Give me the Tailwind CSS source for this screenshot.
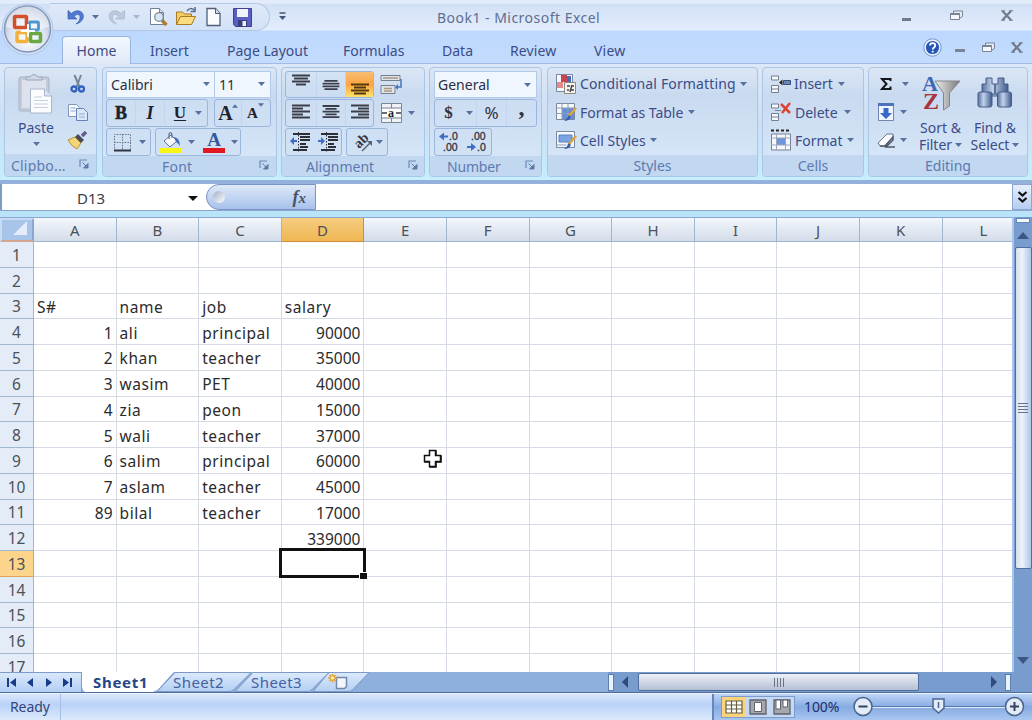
<!DOCTYPE html>
<html lang="en">
<head>
    <meta charset="UTF-8">
    <meta name="viewport" content="width=device-width, initial-scale=1.0">
    <title>Book1 - Microsoft Excel</title>
    <script src="https://cdn.jsdelivr.net/npm/@tailwindcss/browser@4"></script>
</head>
<body class="w-[1032px] h-[720px] overflow-hidden bg-[#bfdbff] font-['Noto_Sans',sans-serif] text-[14px] text-[#3c4c86] whitespace-nowrap">
    <!-- shared icons -->
    <svg class="hidden">
        <symbol id="down" viewBox="0 0 7 4"><path d="M0 0h7L3.5 4z" fill="#56719f"/></symbol>
        <symbol id="launcher" viewBox="0 0 10 10"><path d="M1 8V1h7" fill="none" stroke="#7089b5" stroke-width="1.2"/><path d="M3.5 3.5l4 4M9 4.500V9H4.500z" fill="#5f79a8" stroke="#5f79a8"/></symbol>
        <symbol id="restore" viewBox="0 0 13 11"><path d="M3.500 3V1h9v5.500L10 8" fill="#e6ecf6" stroke="#7b8494"/><path d="M.5 3.500h9v6h-9z" fill="#f4f7fc" stroke="#7b8494"/><path d="M0 3h10v2H0z" fill="#7b8494"/></symbol>
        <symbol id="close" viewBox="0 0 12 11"><path d="M1.500 1l8.500 9M10 1L1.500 10" stroke="#727a88" stroke-width="2.200"/><path d="M0 .8h4M8 .8h4M0 10.200h4M8 10.200h4" stroke="#727a88" stroke-width="1"/></symbol>
    </svg>

    <div class="flex flex-col h-[720px]">
        <!-- title bar + tabs -->
        <header class="relative h-[64px] shrink-0">
            <div class="h-[31px] flex items-center bg-linear-to-b from-[#e2ecfb] from-10% via-[#d2e0f6] via-15% to-[#e3eefd] border-b border-[#d3e5fd]">
                <div class="ml-[50px] h-[28px] w-[220px] mt-[4px] rounded-r-full border border-[#b3c8e8] border-l-0 bg-linear-to-b from-[#dfe9f8] to-[#d3e2f7] flex items-center pl-[17px]">
                    <svg class="w-[19px] h-[19px]" viewBox="0 0 19 19"><path d="M1 2.500v8.500h9L7 8.300C10 5.500 13.500 6 13 10c-.3 3-2 4.500-4 6 5-1.500 7.800-4.500 7.300-8.800C15.500 2.500 9 1 4.500 5.500z" fill="#5079cf" stroke="#3560b5" stroke-width=".7"/></svg>
                    <svg class="w-[7px] h-[4px] ml-[6px]"><use href="#down"/></svg>
                    <svg class="w-[19px] h-[19px] ml-[8px]" viewBox="0 0 19 19"><path d="M17.500 2.500v8.500h-9l3-2.700C8.500 5.500 5 6 5.500 10c.3 3 2 4.500 4 6-5-1.500-7.800-4.500-7.300-8.800C3 2.500 9.500 1 14 5.500z" fill="#bcc9dc" stroke="#a8b6cb" stroke-width=".7"/></svg>
                    <svg class="w-[7px] h-[4px] ml-[7px] opacity-40"><use href="#down"/></svg>
                    <svg class="w-[20px] h-[20px] ml-[9px]" viewBox="0 0 20 20"><path d="M1.500 1.500h9l4 4v12h-13z" fill="#fff" stroke="#70809c"/><path d="M10.500 1.500v4h4" fill="#cfdbee" stroke="#70809c"/><path d="M13 13.500l4.500 4.500" stroke="#b07a30" stroke-width="3.500"/><circle cx="10" cy="10" r="4.300" fill="#d7e8f5" stroke="#7b8ba4" stroke-width="1.300"/></svg>
                    <svg class="w-[22px] h-[20px] ml-[6px]" viewBox="0 0 22 20"><path d="M1.500 17V5h6l2 2h7v10z" fill="#f2cb62" stroke="#a97c22"/><path d="M1.500 17.500l4-8h15l-4 8z" fill="#fbdd80" stroke="#a97c22"/><path d="M12 4c2-3 5-3 7-1M20 0v4.500h-4.500" fill="none" stroke="#546a8f" stroke-width="1.500"/></svg>
                    <svg class="w-[16px] h-[20px] ml-[9px]" viewBox="0 0 16 20"><path d="M1 1.500h8.500l4.500 5v12H1z" fill="#fbfcff" stroke="#4f5d78" stroke-width="1.300"/><path d="M9.500 1.500v5H14" fill="#cfdbee" stroke="#4f5d78"/></svg>
                    <svg class="w-[19px] h-[19px] ml-[11px]" viewBox="0 0 19 19"><path d="M.5.500h18v18h-16l-2-2z" fill="#5a5fc4" stroke="#3e4292"/><path d="M4 1h11v8H4z" fill="#f0f3fb"/><path d="M5 12h9v6.500H5z" fill="#3a3e80"/><path d="M9.500 13h3.500v5H9.500z" fill="#f0f3fb"/></svg>
                </div>
                <svg class="w-[9px] h-[9px] ml-[8px] mt-[2px]" viewBox="0 0 9 9"><path d="M1.500 1h6" stroke="#44557a" stroke-width="1.500"/><path d="M1 4h7L4.500 8z" fill="#44557a"/></svg>
                <div class="ml-[150px] mt-[5px] w-[170px] text-[14px] text-[#5d6f92] tracking-[0.48px]">Book1 - Microsoft Excel</div>
                <div class="ml-[295px] mt-[8px] w-[9px] h-[3px] bg-[#727a88]"></div>
                <svg class="w-[13px] h-[11px] ml-[39px]"><use href="#restore"/></svg>
                <svg class="w-[12px] h-[11px] ml-[38px]"><use href="#close"/></svg>
            </div>
            <nav class="flex h-[33px] items-end bg-linear-to-b from-[#bcd8ff] to-[#c4dcfd] border-b border-[#9fbde6]">
                <div class="ml-[62px] w-[69px] h-[28px] -mb-px pt-[3px] text-center rounded-t-[4px] border border-b-0 border-[#95b4df] bg-linear-to-b from-[#f3f8ff] to-[#dfe9f6]">Home</div>
                <div class="w-[39px] h-[23px] ml-[19px]">Insert</div>
                <div class="w-[82px] h-[23px] ml-[38px]">Page Layout</div>
                <div class="w-[62px] h-[23px] ml-[34px]">Formulas</div>
                <div class="w-[33px] h-[23px] ml-[37px]">Data</div>
                <div class="w-[49px] h-[23px] ml-[35px] tracking-[0.1px]">Review</div>
                <div class="w-[33px] h-[23px] ml-[35px] tracking-[0.2px]">View</div>
                <svg class="w-[19px] h-[19px] ml-[296px] mb-[6px]" viewBox="0 0 19 19"><circle cx="9.500" cy="9.500" r="8.700" fill="#eaf2fd" stroke="#6f92cc"/><circle cx="9.500" cy="9.500" r="6.600" fill="#2456b8"/><path d="M7 7.500c0-3.300 5.300-3.300 5.300 0 0 2-2.600 2-2.600 4M9.700 12.700v1.700" fill="none" stroke="#fff" stroke-width="1.800"/></svg>
                <div class="w-[10px] h-[3px] ml-[13px] mb-[11px] bg-[#7b8494]"></div>
                <svg class="w-[13px] h-[11px] ml-[17px] mb-[10px]"><use href="#restore"/></svg>
                <svg class="w-[12px] h-[11px] ml-[16px] mb-[10px]"><use href="#close"/></svg>
            </nav>
            <!-- office button -->
            <svg class="absolute left-[1px] top-[3px] w-[54px] h-[54px]" viewBox="0 0 54 54">
                <defs><radialGradient id="orb" cx=".5" cy=".7" r=".65"><stop offset="0" stop-color="#fff"/><stop offset=".6" stop-color="#dbe3f0"/><stop offset="1" stop-color="#a9b9d3"/></radialGradient></defs>
                <circle cx="26.500" cy="26.500" r="25.500" fill="#cfdff5" stroke="#b3c8e8"/>
                <circle cx="26.500" cy="26" r="23" fill="url(#orb)" stroke="#8497b8" stroke-width="1.500"/>
                <path d="M5 24a21.500 20.500 0 0 1 43 0q-21 7-43 0z" fill="#fff" opacity=".5"/>
                <g fill="none" stroke-width="3.500">
                    <rect x="13.500" y="13.500" width="12" height="11" rx="1" stroke="#d2502a"/>
                    <rect x="28.500" y="19" width="9" height="8" rx="1" stroke="#4f95d0" stroke-width="2.800"/>
                    <rect x="16" y="29.500" width="10" height="9" rx="1" stroke="#f2b13a"/>
                    <rect x="29.500" y="30.500" width="10" height="8" rx="1" stroke="#69a843"/>
                </g>
                <path d="M20 28h14M27 21v13" stroke="#fff" stroke-width="2"/>
            </svg>
        </header>

        <!-- ribbon -->
        <section class="h-[116px] shrink-0 flex pl-[4px] pt-[3px] bg-linear-to-b from-[#dce8f7] via-[#cddff5] to-[#c3eefc] border-b-2 border-[#c5f0fc]">
            <!-- Clipboard -->
            <div class="w-[93px] h-[110px] mr-[5px] flex flex-col rounded-[4px] border border-[#aac5e6] overflow-hidden bg-linear-to-b from-[#dce7f5] via-[#c9daf0] via-25% to-[#dae9fa]">
                <div class="flex h-[88px]">
                    <div class="w-[62px] flex flex-col items-center pt-[5px]">
                        <svg class="w-[36px] h-[42px]" viewBox="0 0 36 42"><rect x="1" y="4" width="30" height="34" rx="2" fill="#c3cad9" stroke="#a9b3c6"/><rect x="4" y="7" width="24" height="28" fill="#dde2ec"/><path d="M8 7V4h4q4-5 8 0h4v3z" fill="#d0d7e3" stroke="#98a4b8"/><path d="M12.500 16h14l7 7v17h-21z" fill="#fbfcfe" stroke="#a9b6cc"/><path d="M26.500 16v7h7" fill="#dbe4f1" stroke="#a9b6cc"/><path d="M16 24h8m-8 3.500h14M16 31h14m-14 3.500h14" stroke="#c5cfdf"/></svg>
                        <span class="mt-[3px] leading-[20px]">Paste</span>
                        <svg class="w-[7px] h-[4px] mt-[4px]"><use href="#down"/></svg>
                    </div>
                    <div class="flex flex-col items-center gap-[8px] pt-[6px] w-[22px]">
                        <svg class="w-[18px] h-[20px]" viewBox="0 0 18 20"><path d="M5.500 1l5 12M12 1L7.500 13" stroke="#75849b" stroke-width="2"/><circle cx="5" cy="15" r="2.500" fill="none" stroke="#3461bd" stroke-width="2.300"/><circle cx="12.500" cy="15" r="2.500" fill="none" stroke="#3461bd" stroke-width="2.300"/></svg>
                        <svg class="w-[22px] h-[20px]" viewBox="0 0 22 20"><path d="M1.500 2.500h8l3 3v9h-11z" fill="#f6f9fe" stroke="#8297bd"/><path d="M9.500 6.500h7l4 4v8h-11z" fill="#dce8f9" stroke="#6482b8"/><path d="M3.500 6h5m-5 3h5M12 12h6m-6 3h6" stroke="#92aad3"/></svg>
                        <svg class="w-[22px] h-[20px]" viewBox="0 0 22 20"><path d="M1 10l7-3 6 6-4 6Q5 17 1 10z" fill="#f4d678" stroke="#b88f35"/><path d="M8 7l3-3 6 6-3 3z" fill="#4a4b58"/><path d="M15 6l4-4" stroke="#665a8e" stroke-width="3.500"/></svg>
                    </div>
                </div>
                <div class="flex-1 flex items-center bg-[#c1d8f0] text-[#6078b0] pl-[6px] pt-[1px]"><span class="w-[56px] tracking-[0.2px]">Clipbo...</span><svg class="w-[10px] h-[10px] ml-[12px] -mt-[4px]"><use href="#launcher"/></svg></div>
            </div>
            <!-- Font -->
            <div class="w-[175px] h-[110px] mr-[4px] flex flex-col rounded-[4px] border border-[#aac5e6] overflow-hidden bg-linear-to-b from-[#dce7f5] via-[#c9daf0] via-25% to-[#dae9fa]">
                <div class="h-[88px] pl-[3px] pt-[3px]">
                    <div class="flex h-[27px]">
                        <div class="w-[109px] flex items-center justify-between bg-[#f0f6fe] border border-[#b3cae8] pl-[4px] pr-[4px] pb-px text-[#2a3042]">Calibri<svg class="w-[7px] h-[4px]"><use href="#down"/></svg></div>
                        <div class="w-[56px] flex items-center justify-between bg-[#f0f6fe] border border-[#b3cae8] border-l-0 pl-[4px] pr-[5px] pb-px text-[#2a3042]">11<svg class="w-[7px] h-[4px]"><use href="#down"/></svg></div>
                    </div>
                    <div class="flex h-[28px] gap-[6px] mt-px font-['Liberation_Serif',serif] text-[#20222a]">
                        <div class="w-[102px] flex items-center rounded-[3px] border border-[#9ab6dc] bg-[#cfdff4]/60">
                            <b class="w-[28px] text-center text-[18px] leading-[24px] [-webkit-text-stroke:0.5px]">B</b><i class="w-[30px] text-center text-[18px] leading-[24px] font-bold border-x border-[#c3d4ec]">I</i><b class="w-[30px] text-center text-[17px] leading-[24px] underline underline-offset-2">U</b><svg class="w-[7px] h-[4px]"><use href="#down"/></svg>
                        </div>
                        <div class="w-[57px] flex items-center rounded-[3px] border border-[#9ab6dc] bg-[#cfdff4]/60">
                            <div class="w-[27px] flex justify-center border-r border-[#c3d4ec]"><b class="text-[20px] leading-[25px]">A</b><svg class="w-[6px] h-[4px] mt-[3px] -ml-px rotate-180"><use href="#down"/></svg></div>
                            <div class="w-[27px] flex justify-center"><b class="text-[15px] leading-[29px]">A</b><svg class="w-[6px] h-[4px] mt-[4px]"><use href="#down"/></svg></div>
                        </div>
                    </div>
                    <div class="flex h-[28px] gap-[4px] mt-px">
                        <div class="w-[45px] flex items-center rounded-[3px] border border-[#9ab6dc] bg-[#cfdff4]/60 pl-[6px]">
                            <svg class="w-[19px] h-[19px]" viewBox="0 0 19 19"><path d="M1.500 18V1.500h16V18M9.500 1v17M1 9.500h17" fill="none" stroke="#647087" stroke-dasharray="1.500 1.200"/><path d="M1 17.500h17" stroke="#2e3544" stroke-width="2"/></svg>
                            <svg class="w-[7px] h-[4px] ml-[7px]"><use href="#down"/></svg>
                        </div>
                        <div class="w-[86px] flex items-center rounded-[3px] border border-[#9ab6dc] bg-[#cfdff4]/60 pl-[4px]">
                            <svg class="w-[22px] h-[21px]" viewBox="0 0 22 21"><path d="M0 16h21v5H0z" fill="#f7f416"/><path d="M4 9l7-6 6 6-7 6z" fill="#f5f8fc" stroke="#61708b"/><path d="M9 7V2q2-3 3 1v3" fill="none" stroke="#61708b" stroke-width="1.200"/><path d="M14 5q6 1 6 9-2-3-4-4z" fill="#446bba"/></svg>
                            <svg class="w-[7px] h-[4px] ml-[6px]"><use href="#down"/></svg>
                            <div class="ml-[8px] w-[22px] h-[22px] flex flex-col items-center border-b-5 border-[#df1822] font-['Liberation_Serif',serif] text-[19px] leading-[17px] font-bold text-[#35599c]">A</div>
                            <svg class="w-[7px] h-[4px] ml-[6px]"><use href="#down"/></svg>
                        </div>
                    </div>
                </div>
                <div class="flex-1 flex items-center bg-[#c1d8f0] text-[#6078b0] pl-[59px]"><span class="w-[40px] tracking-[0.2px]">Font</span><svg class="w-[10px] h-[10px] ml-[57px] -mt-[4px]"><use href="#launcher"/></svg></div>
            </div>
            <!-- Alignment -->
            <div class="w-[144px] h-[110px] mr-[4px] flex flex-col rounded-[4px] border border-[#aac5e6] overflow-hidden bg-linear-to-b from-[#dce7f5] via-[#c9daf0] via-25% to-[#dae9fa]">
                <div class="h-[88px] pl-[3px] pt-[3px] text-[#30333c]">
                    <div class="flex h-[27px]">
                        <div class="w-[89px] flex rounded-[3px] border border-[#9ab6dc] bg-[#cfdff4]/60">
                            <svg class="w-[30px] h-[25px]" viewBox="0 0 30 25"><path d="M6 3.500h18M8 6.500h14M6 9.500h18M10 12.500h10" stroke="#3b3e48" stroke-width="1.900"/></svg>
                            <svg class="w-[30px] h-[25px] border-x border-[#c3d4ec]" viewBox="0 0 30 25"><path d="M8 8.500h14M6 11.500h18M6 14.500h18M8 17.500h14" stroke="#3b3e48" stroke-width="1.900"/></svg>
                            <svg class="w-[27px] h-[25px] bg-linear-to-b from-[#f6bd73] via-[#fda43f] to-[#fde36b]" viewBox="0 0 27 25"><path d="M5 12.500h18M8 15.500h12M5 18.500h18M8 21.500h12" stroke="#54380e" stroke-width="1.900"/></svg>
                        </div>
                        <svg class="w-[24px] h-[22px] ml-[6px] mt-[3px]" viewBox="0 0 24 22"><path d="M1 1.500h19v5H1zM1 11.500h14v8H1z" fill="#dfe4ec" stroke="#75808f"/><path d="M3 4h15M4 14.500h8M4 17h8" stroke="#a79880" stroke-width="1.500"/><path d="M21 5v8h-4" fill="none" stroke="#4a72bb" stroke-width="1.500"/><path d="M18 10v6l-3-3z" fill="#4a72bb"/></svg>
                    </div>
                    <div class="flex items-center h-[28px] mt-px">
                        <div class="w-[89px] h-full flex rounded-[3px] border border-[#9ab6dc] bg-[#cfdff4]/60">
                            <svg class="w-[30px] h-[26px]" viewBox="0 0 30 26"><path d="M6 5.500h18M6 8.500h11M6 11.500h18M6 14.500h11M6 17.500h18" stroke="#3b3e48" stroke-width="1.900"/></svg>
                            <svg class="w-[30px] h-[26px] border-x border-[#c3d4ec]" viewBox="0 0 30 26"><path d="M6 5.500h18M9 8.500h12M6 11.500h18M9 14.500h12M6 17.500h18" stroke="#3b3e48" stroke-width="1.900"/></svg>
                            <svg class="w-[27px] h-[26px]" viewBox="0 0 27 26"><path d="M5 5.500h18M12 8.500h11M5 11.500h18M12 14.500h11M5 17.500h18" stroke="#3b3e48" stroke-width="1.900"/></svg>
                        </div>
                        <svg class="w-[21px] h-[20px] ml-[7px]" viewBox="0 0 21 20"><path d="M.500.500h20v19H.500zM.500 5h20M.500 15h20M10.500 0v5m0 10v5" fill="#eef1f6" stroke="#7b8697"/><path d="M1 6h19v8H1z" fill="#fff"/><path d="M1 10h5M20 10h-5" stroke="#3b3e48" stroke-width="1.500"/><text x="7" y="13.500" font-size="12" font-weight="bold" font-family="Liberation Serif" fill="#222">a</text></svg>
                        <svg class="w-[7px] h-[4px] ml-[6px]"><use href="#down"/></svg>
                    </div>
                    <div class="flex h-[28px] gap-[4px] mt-px">
                        <div class="w-[57px] flex items-center rounded-[3px] border border-[#9ab6dc] bg-[#cfdff4]/60 pl-[4px] gap-[7px]">
                            <svg class="w-[21px] h-[20px]" viewBox="0 0 21 20"><path d="M3 2h17M10 5h10M10 8h10M10 12h6M10 15h8M3 18h14" stroke="#2d3039" stroke-width="2"/><path d="M8.500 0v20" stroke="#2d3039" stroke-dasharray="1.500"/><path d="M0 9l4-4v3h3v2H4v3z" fill="#3f6cc4"/></svg>
                            <svg class="w-[21px] h-[20px]" viewBox="0 0 21 20"><path d="M3 2h17M10 5h10M10 8h10M10 12h6M10 15h8M3 18h14" stroke="#2d3039" stroke-width="2"/><path d="M8.500 0v20" stroke="#2d3039" stroke-dasharray="1.500"/><path d="M7 9L3 5v3H0v2h3v3z" fill="#3f6cc4"/></svg>
                        </div>
                        <div class="w-[42px] flex items-center rounded-[3px] border border-[#9ab6dc] bg-[#cfdff4]/60 pl-[5px]">
                            <svg class="w-[21px] h-[21px] overflow-visible" viewBox="0 0 21 21"><text x="7" y="17" transform="rotate(-45 7 17)" font-size="14" font-weight="bold" font-family="Liberation Serif" fill="#333743">ab</text><path d="M10 19l8-8" stroke="#59616f" stroke-width="1.400"/><path d="M20 9v5l-5-5z" fill="#59616f"/></svg>
                            <svg class="w-[7px] h-[4px] ml-[3px]"><use href="#down"/></svg>
                        </div>
                    </div>
                </div>
                <div class="flex-1 flex items-center bg-[#c1d8f0] text-[#6078b0] pl-[24px]"><span class="w-[70px]">Alignment</span><svg class="w-[10px] h-[10px] ml-[32px] -mt-[4px]"><use href="#launcher"/></svg></div>
            </div>
            <!-- Number -->
            <div class="w-[113px] h-[110px] mr-[5px] flex flex-col rounded-[4px] border border-[#aac5e6] overflow-hidden bg-linear-to-b from-[#dce7f5] via-[#c9daf0] via-25% to-[#dae9fa]">
                <div class="h-[88px] pl-[4px] pt-[3px] text-[#30333c]">
                    <div class="w-[103px] h-[27px] flex items-center justify-between bg-[#f0f6fe] border border-[#b3cae8] pl-[3px] pr-[5px] text-[14px] text-[#2a3042]">General<svg class="w-[7px] h-[4px]"><use href="#down"/></svg></div>
                    <div class="w-[103px] h-[28px] mt-px flex items-center rounded-[3px] border border-[#9ab6dc] bg-[#cfdff4]/60">
                        <b class="w-[27px] text-center font-['Liberation_Serif',serif] text-[17px]">$</b><svg class="w-[7px] h-[4px] ml-[4px]"><use href="#down"/></svg>
                        <span class="w-[31px] h-full ml-[3px] border-x border-[#c3d4ec] text-center text-[17px] leading-[25px]">%</span>
                        <b class="w-[29px] -mt-[12px] text-center font-['Liberation_Serif',serif] text-[24px] leading-[20px]">,</b>
                    </div>
                    <div class="w-[58px] h-[28px] mt-px flex items-center rounded-[3px] border border-[#9ab6dc] bg-[#cfdff4]/60 pl-[3px] gap-[6px]">
                        <svg class="w-[22px] h-[24px] overflow-visible" viewBox="0 0 22 24" font-family="Liberation Sans" font-size="10.5" fill="#30333c" stroke="#30333c" stroke-width=".3"><text x="11" y="10">.0</text><text x="5" y="20.500">.00</text><path d="M1 6.500l5-4v3h4v2H6v3z" fill="#3f6cc4" stroke="none"/></svg>
                        <svg class="w-[22px] h-[24px] overflow-visible" viewBox="0 0 22 24" font-family="Liberation Sans" font-size="10.5" fill="#30333c" stroke="#30333c" stroke-width=".3"><text x="5" y="10">.00</text><text x="11" y="20.500">.0</text><path d="M10 17l-5-4v3H1v2h4v3z" fill="#3f6cc4" stroke="none"/></svg>
                    </div>
                </div>
                <div class="flex-1 flex items-center bg-[#c1d8f0] text-[#6078b0] pl-[17px]"><span class="w-[54px] tracking-[-0.2px]">Number</span><svg class="w-[10px] h-[10px] ml-[24px] -mt-[4px]"><use href="#launcher"/></svg></div>
            </div>
            <!-- Styles -->
            <div class="w-[211px] h-[110px] mr-[4px] flex flex-col rounded-[4px] border border-[#aac5e6] overflow-hidden bg-linear-to-b from-[#dce7f5] via-[#c9daf0] via-25% to-[#dae9fa]">
                <div class="h-[88px] pl-[7px] pt-[2px]">
                    <div class="h-[28px] flex items-center">
                        <svg class="w-[22px] h-[22px]" viewBox="0 0 22 22"><path d="M1.500 1.500h16v17h-16z" fill="#f6f8fc" stroke="#7b87a0"/><path d="M6 2h6v7H6z" fill="#c9454b"/><path d="M2 9h6v6H2z" fill="#e58a8a"/><path d="M12 3h4v8h-4z" fill="#4669b8"/><path d="M9.500 9.500h11v11h-11z" fill="#f4f4f2" stroke="#8c8778"/><path d="M12 13h3m2 0h2m-7 4h2m2 0h3m-2-5l-2 7" stroke="#444" stroke-width="1.500"/></svg>
                        <span class="ml-[3px] w-[157px] pb-px tracking-[0.15px]">Conditional Formatting</span><svg class="w-[7px] h-[4px] ml-[3px]"><use href="#down"/></svg>
                    </div>
                    <div class="h-[28px] flex items-center">
                        <svg class="w-[22px] h-[20px]" viewBox="0 0 22 20"><path d="M1.500 1.500h18v16h-18z" fill="#f6f8fc" stroke="#7b87a0"/><path d="M7 6h12v11H7z" fill="#6591d6"/><path d="M1 6h18M1 11.500h18M7 1v16M13 1v16" stroke="#8e9bb5"/><path d="M21 6l-8 9" stroke="#d9a53e" stroke-width="2.500"/><path d="M14 13l2 2q-2 4-7 4 3-2 5-6z" fill="#2f5eb6"/></svg>
                        <span class="ml-[3px] w-[103px] tracking-[-0.05px]">Format as Table</span><svg class="w-[7px] h-[4px] ml-[5px]"><use href="#down"/></svg>
                    </div>
                    <div class="h-[28px] flex items-center">
                        <svg class="w-[22px] h-[20px]" viewBox="0 0 22 20"><path d="M1.500 1.500h18v16h-18z" fill="#f6f8fc" stroke="#7b87a0"/><path d="M4 5h13v7H4z" fill="#7ba4e4" stroke="#5a80c2"/><path d="M1 15h10" stroke="#8e9bb5"/><path d="M21 6l-8 9" stroke="#d9a53e" stroke-width="2.500"/><path d="M14 13l2 2q-2 4-7 4 3-2 5-6z" fill="#2f5eb6"/></svg>
                        <span class="ml-[3px] w-[65px]">Cell Styles</span><svg class="w-[7px] h-[4px] ml-[5px]"><use href="#down"/></svg>
                    </div>
                </div>
                <div class="flex-1 flex items-center justify-center bg-[#c1d8f0] text-[#6078b0]">Styles</div>
            </div>
            <!-- Cells -->
            <div class="w-[102px] h-[110px] mr-[4px] flex flex-col rounded-[4px] border border-[#aac5e6] overflow-hidden bg-linear-to-b from-[#dce7f5] via-[#c9daf0] via-25% to-[#dae9fa]">
                <div class="h-[88px] pl-[7px] pt-[2px]">
                    <div class="h-[28px] flex items-center">
                        <svg class="w-[22px] h-[20px]" viewBox="0 0 22 20"><path d="M1.500 2h7v4h-7zM1.500 11.500h7v7h-7zM1.500 15h7" fill="#f6f8fc" stroke="#737e93"/><path d="M13.500 6.500h7v4h-7z" fill="#6b83b5" stroke="#34507f"/><path d="M9 8.500l3.500-3v6z" fill="#222"/></svg>
                        <span class="ml-[2px] w-[39px] pb-px">Insert</span><svg class="w-[7px] h-[4px] ml-[5px]"><use href="#down"/></svg>
                    </div>
                    <div class="h-[28px] flex items-center">
                        <svg class="w-[22px] h-[20px]" viewBox="0 0 22 20"><path d="M1.500 2h7v4h-7zM1.500 11.500h7v7h-7zM1.500 15h7M5 8.500h6" fill="#f6f8fc" stroke="#737e93"/><path d="M11 2l9 9M20 1l-8 10" stroke="#df4230" stroke-width="2.500"/></svg>
                        <span class="ml-[3px] w-[43px]">Delete</span><svg class="w-[7px] h-[4px] ml-[6px]"><use href="#down"/></svg>
                    </div>
                    <div class="h-[28px] flex items-center">
                        <svg class="w-[22px] h-[22px]" viewBox="0 0 22 22"><path d="M1 1.500h18" stroke="#222" stroke-width="2" stroke-dasharray="3 2"/><path d="M1.500 5h19v16h-19z" fill="#f6f8fc" stroke="#737e93"/><path d="M7 9h8v7H7z" fill="#6f95dc"/><path d="M1 9h20M1 16h20M6.500 5v16M15.500 5v16" stroke="#9ba6ba"/></svg>
                        <span class="ml-[3px] w-[46px]">Format</span><svg class="w-[7px] h-[4px] ml-[6px]"><use href="#down"/></svg>
                    </div>
                </div>
                <div class="flex-1 flex items-center justify-center bg-[#c1d8f0] text-[#6078b0]">Cells</div>
            </div>
            <!-- Editing -->
            <div class="w-[160px] h-[110px] flex flex-col rounded-[4px] border border-[#aac5e6] overflow-hidden bg-linear-to-b from-[#dce7f5] via-[#c9daf0] via-25% to-[#dae9fa]">
                <div class="h-[88px] flex">
                    <div class="w-[44px] pl-[8px] pt-[2px]">
                        <div class="h-[28px] flex items-center"><svg class="w-[18px] h-[16px]" viewBox="0 0 18 16"><path d="M13.500 5V3H5l4.500 5L5 13h8.500v-2.500" fill="none" stroke="#15161a" stroke-width="2"/></svg><svg class="w-[7px] h-[4px] ml-[7px]"><use href="#down"/></svg></div>
                        <div class="h-[28px] flex items-center"><svg class="w-[18px] h-[20px]" viewBox="0 0 18 20"><path d="M1.500 1.500h15v17h-15z" fill="#f0f5fd" stroke="#7287b0"/><path d="M1 1h16v3H1z" fill="#4a72bd"/><path d="M6.500 6h5v5h3.500L9 17l-6-6h3.500z" fill="#3568c8"/></svg><svg class="w-[7px] h-[4px] ml-[5px]"><use href="#down"/></svg></div>
                        <div class="h-[28px] flex items-center"><svg class="w-[19px] h-[18px]" viewBox="0 0 19 18"><path d="M1 12l9-9h6v3l-8 9H3z" fill="#fafbfd" stroke="#6c7587"/><path d="M3 15h5l8-9v3l-7 7H18" fill="none" stroke="#4f5869" stroke-width="1.500"/></svg><svg class="w-[7px] h-[4px] ml-[4px]"><use href="#down"/></svg></div>
                    </div>
                    <div class="w-[55px] flex flex-col items-center pt-[5px]">
                        <svg class="w-[40px] h-[40px]" viewBox="0 0 40 40" font-family="Liberation Serif" font-weight="bold"><defs><linearGradient id="fun"><stop offset="0" stop-color="#ededea"/><stop offset="1" stop-color="#77787c"/></linearGradient></defs><path d="M14 8h25L28.500 20v13l-6 4V20z" fill="url(#fun)" stroke="#85868c"/><text x="1" y="18" font-size="22" fill="#3f67b5">A</text><text x="2" y="36" font-size="24" fill="#a5343c">Z</text></svg>
                        <div class="mt-[6px] leading-[17px]">Sort &amp;</div>
                        <div class="leading-[17px] flex items-center gap-[3px]">Filter<svg class="w-[7px] h-[4px]"><use href="#down"/></svg></div>
                    </div>
                    <div class="w-[54px] flex flex-col items-center pt-[5px]">
                        <svg class="w-[36px] h-[40px]" viewBox="0 0 36 40"><defs><linearGradient id="bin"><stop offset="0" stop-color="#56719f"/><stop offset=".4" stop-color="#c2d2ea"/><stop offset="1" stop-color="#3f5a8c"/></linearGradient></defs><g stroke="#465d88" fill="url(#bin)"><path d="M14 13h8v10h-8z"/><path d="M9 5h6v6h3v10H5V11h4zM21 5h6v6h4v10H18V11h3z"/><rect x="1" y="19" width="14" height="15" rx="2"/><rect x="20.500" y="19" width="14" height="15" rx="2"/></g></svg>
                        <div class="mt-[6px] leading-[17px]">Find &amp;</div>
                        <div class="leading-[17px] flex items-center gap-[3px]">Select<svg class="w-[7px] h-[4px]"><use href="#down"/></svg></div>
                    </div>
                </div>
                <div class="flex-1 flex items-center justify-center bg-[#c1d8f0] text-[#6078b0]">Editing</div>
            </div>
        </section>

        <!-- formula bar -->
        <section class="h-[37px] shrink-0 bg-[#b9e3f8] border-t-4 border-[#94b1dc]">
            <div class="h-[27px] flex border-b border-[#8ba6cf] bg-white">
                <div class="w-[206px] flex items-center pl-[75px] pt-[2px] border-l-2 border-[#7f9cc8] text-[15px] text-[#3b4048]"><span class="w-[32px]">D13</span><svg class="w-[10px] h-[5px] ml-[79px]" viewBox="0 0 10 5"><path d="M0 0h10L5 5z" fill="#111"/></svg></div>
                <div class="w-[110px] flex items-center justify-between rounded-l-full border border-[#7795c6] bg-linear-to-b from-[#dfe9f8] to-[#a7c1ec] pl-[6px] pr-[9px]">
                    <div class="w-[12px] h-[12px] rounded-full bg-linear-to-br from-[#a5b0c4] to-white"></div>
                    <i class="font-['Liberation_Serif',serif] font-bold text-[18px] leading-[20px] text-[#4b5263]">f<span class="text-[15px]">x</span></i>
                </div>
                <div class="flex-1"></div>
                <div class="w-[20px] flex items-center justify-center border border-[#8ba6cf] bg-linear-to-b from-[#e5effc] to-[#b5cdf1]"><svg class="w-[11px] h-[13px]" viewBox="0 0 11 13"><path d="M1.500 1l4 3.500 4-3.500M1.500 7l4 3.500 4-3.500" fill="none" stroke="#111" stroke-width="2.200"/></svg></div>
            </div>
        </section>

        <!-- sheet -->
        <main class="relative flex h-[455px] shrink-0">
            <div class="w-[1012px] overflow-hidden bg-white">
                <div id="head" class="flex h-[25px] text-[15px] text-[#4c5158] border-t border-[#8ba6cf]">
                    <div class="w-[34px] shrink-0 flex items-end justify-end p-[5px] bg-[#a9c4e9] border-2 border-r-[#8ba6cf] border-b-[#d6a593] border-l-[#c8dcf5] border-t-[#c8dcf5]"><svg class="w-[14px] h-[14px]" viewBox="0 0 14 14"><path d="M14 0v14H0z" fill="#e4edf9"/></svg></div>
                </div>
                <div id="rows"></div>
            </div>
            <div class="w-[20px] flex flex-col items-center bg-[#779ccd] border-l-2 border-[#a8c6ec]">
                <div class="w-[14px] h-[5px] mt-px border border-[#6788bb] bg-[#f3f8fe]"></div>
                <svg class="w-[12px] h-[7px] mt-[9px]" viewBox="0 0 12 7"><path d="M6 0l6 7H0z" fill="#3d5685"/></svg>
                <div class="w-[17px] h-[322px] mt-[8px] flex items-center justify-center rounded-[2px] border border-[#526d9e] bg-linear-to-r from-[#d4deec] via-[#eff4fb] via-40% to-[#abc6e8]">
                    <div class="w-[10px] h-[10px] flex flex-col justify-between"><i class="h-px bg-[#6b7484]"></i><i class="h-px bg-[#6b7484]"></i><i class="h-px bg-[#6b7484]"></i><i class="h-px bg-[#6b7484]"></i></div>
                </div>
                <svg class="w-[12px] h-[7px] mt-[88px]" viewBox="0 0 12 7"><path d="M6 7l6-7H0z" fill="#3d5685"/></svg>
            </div>
            <!-- active cell -->
            <div class="absolute left-[279px] top-[331px] w-[87px] h-[30px] border-[3px] border-[#111]"></div>
            <div class="absolute left-[359px] top-[355px] w-[8px] h-[7px] bg-[#111] border-t border-l border-white"></div>
            <!-- mouse pointer -->
            <svg class="absolute left-[422px] top-[231px] w-[22px] h-[22px]" viewBox="0 0 22 22"><path d="M8 3h6v5h5v6h-5v5H8v-5H3V8h5z" fill="#111" stroke="#111" stroke-width="1.500"/><path d="M7.500 2.500h6v5h5v6h-5v5h-6v-5h-5v-6h5z" fill="#fff" stroke="#111" stroke-width="1.500"/></svg>
        </main>

        <!-- sheet tabs -->
        <section class="h-[21px] shrink-0 flex bg-[#779ccd] border-b border-[#4f6d9f]">
            <div class="w-[82px] h-[20px] flex items-center gap-[9px] pl-[7px] border-t border-r border-[#7d9bcb] bg-linear-to-b from-[#dae8fb] to-[#b3cef3]">
                <svg class="w-[9px] h-[9px]" viewBox="0 0 9 9"><path d="M0 0h2v9H0zM9 0v9L3 4.500z" fill="#173b86"/></svg>
                <svg class="w-[9px] h-[9px] ml-px" viewBox="0 0 9 9"><path d="M7 0v9L1 4.500z" fill="#173b86"/></svg>
                <svg class="w-[9px] h-[9px]" viewBox="0 0 9 9"><path d="M2 0v9l6-4.500z" fill="#173b86"/></svg>
                <svg class="w-[9px] h-[9px] ml-px" viewBox="0 0 9 9"><path d="M7 0h2v9H7zM0 0v9l6-4.500z" fill="#173b86"/></svg>
            </div>
            <div class="relative w-[526px] h-[20px] bg-[#8fb0dc]">
                <svg class="absolute left-0 top-0 w-[290px] h-[20px]" viewBox="0 0 290 20">
                    <defs><linearGradient id="tab" x2="0" y2="1"><stop offset="0" stop-color="#dceafc"/><stop offset="1" stop-color="#b3cff3"/></linearGradient></defs>
                    <g fill="url(#tab)" stroke="#7d99c6"><path d="M231 19.500L247 .500h40l-16 17q-2 2-5 2z"/><path d="M153 19.500L171 .500h76l-17 17q-2 2-5 2z"/><path d="M75 19.500L93 .500h76l-17 17q-2 2-5 2z"/></g>
                    <path d="M0 0h92L77 17q-2 3-5 3H4q-3 0-4-5z" fill="#fff"/>
                    <path d="M92 .500L77 17q-2 2.500-5 2.500" fill="none" stroke="#7d99c6"/>
                    <path d="M254.500 5.500h10v9l-2 2h-8z" fill="#f2f6fd" stroke="#7387ae" stroke-width="1.500"/><path d="M246 6h9M250.500 2v8.500M247.500 3l6 6M253.500 3l-6 6" stroke="#df9d2f" stroke-width="1.500"/><circle cx="250.500" cy="6" r="1.800" fill="#fff2b0"/>
                </svg>
                <div class="relative flex pl-[11px] leading-[20px] text-[15px] text-[#4661a0] tracking-[0.45px]">
                    <b class="w-[80px] text-[#254786] tracking-[0.7px]">Sheet1</b><span class="w-[78px]">Sheet2</span><span>Sheet3</span>
                </div>
            </div>
            <div class="flex-1 h-[20px] flex items-center">
                <div class="w-[6px] h-[17px] border border-[#5f7fb2] bg-[#e9f3fe]"></div>
                <svg class="w-[7px] h-[12px] ml-[8px]" viewBox="0 0 7 12"><path d="M6 0v12L0 6z" fill="#304b7c"/></svg>
                <div class="w-[281px] h-[18px] ml-[9px] flex items-center justify-center gap-[2px] rounded-[2px] border border-[#526d9e] bg-linear-to-b from-[#edf1f7] to-[#b3bfd3]"><i class="w-px h-[9px] bg-[#6b7484]"></i><i class="w-px h-[9px] bg-[#6b7484]"></i><i class="w-px h-[9px] bg-[#6b7484]"></i><i class="w-px h-[9px] bg-[#6b7484]"></i></div>
                <svg class="w-[7px] h-[12px] ml-[71px]" viewBox="0 0 7 12"><path d="M1 0v12l6-6z" fill="#304b7c"/></svg>
                <div class="w-[6px] h-[17px] ml-[8px] border border-[#5f7fb2] bg-[#e9f3fe]"></div>
            </div>
        </section>

        <!-- status bar -->
        <footer class="flex-1 flex items-center border-t border-[#eaf3ff] bg-linear-to-b from-[#d9e7fb] via-[#bad2f7] via-40% to-[#dceafc] text-[14px] text-[#34467c]">
            <div class="w-[61px] h-full pl-[10px] leading-[25px] tracking-[-0.1px] border-r border-[#a3bfe8]">Ready</div>
            <div class="w-[654px]"></div>
            <div class="flex-1 h-full flex items-center border-l-2 border-[#6787bb] bg-linear-to-b from-[#bdd5f8] via-[#87abe1] via-50% to-[#a8c6f0] pl-[7px]">
                <div class="flex h-[22px] border border-[#7d9bcb] bg-[#c5d9f5]">
                    <svg class="w-[24px] h-[20px] bg-[#fbd37c]" viewBox="0 0 24 20"><path d="M4 4h16v12H4zM4 8h16M4 12h16M9.500 4v12M14.500 4v12" fill="#fff" stroke="#69603f" stroke-width="1.200"/></svg>
                    <svg class="w-[24px] h-[20px]" viewBox="0 0 24 20"><path d="M4 3h16v14H4z" fill="#a5a7ab" stroke="#5e6370" stroke-width="1.300"/><path d="M8.500 5.500h7v9h-7z" fill="#fff" stroke="#5e6370"/></svg>
                    <svg class="w-[24px] h-[20px]" viewBox="0 0 24 20"><path d="M4 3h16v14H4z" fill="#a5a7ab" stroke="#5e6370" stroke-width="1.300"/><path d="M6 3h4.500v9H6zM13 3h4.500v7H13z" fill="#fff" stroke="#5e6370"/></svg>
                </div>
                <span class="ml-[9px] w-[37px] pb-[2px] tracking-[-0.1px] text-[#1e2f6b]">100%</span>
                <svg class="w-[182px] h-[22px] shrink-0 ml-[9px]" viewBox="0 0 182 22">
                    <path d="M22 10.500h134" stroke="#5476ae" stroke-width="1"/><path d="M22 11.500h134" stroke="#dfeafb"/>
                    <g fill="#e3ebf7" stroke="#49648f" stroke-width="1.500"><circle cx="13" cy="10.500" r="9"/><circle cx="164.500" cy="10.500" r="9"/><path d="M83 3h11v9l-5.500 5-5.500-5z"/></g>
                    <path d="M8.500 10.500h9M160 10.500h9M164.500 6v9" stroke="#33435f" stroke-width="2"/><path d="M88.500 6v6" stroke="#49648f" stroke-width="1.500"/>
                </svg>
            </div>
        </footer>
    </div>

    <script>
        const cells = {
            3: ['S#', 'name', 'job', 'salary'],
            4: [1, 'ali', 'principal', 90000],
            5: [2, 'khan', 'teacher', 35000],
            6: [3, 'wasim', 'PET', 40000],
            7: [4, 'zia', 'peon', 15000],
            8: [5, 'wali', 'teacher', 37000],
            9: [6, 'salim', 'principal', 60000],
            10: [7, 'aslam', 'teacher', 45000],
            11: [89, 'bilal', 'teacher', 17000],
            12: ['', '', '', 339000]
        };
        const cols = 'ABCDEFGHIJKL'.split('');
        const head = document.getElementById('head');
        const rows = document.getElementById('rows');

        cols.forEach((c) => {
            const color = c === 'D'
                ? 'bg-linear-to-b from-[#f5cc80] to-[#efb751] border-[#d08b35]'
                : 'bg-linear-to-b from-[#f4f7fb] to-[#d3dcea] border-[#9eb6ce]';
            head.innerHTML += `<div class="w-[82.6px] shrink-0 flex items-center justify-center pt-px border-r border-b ${color}">${c}</div>`;
        });

        for (let r = 1; r <= 17; r++) {
            const color = r === 13 ? 'bg-[#fdd48b] border-[#e0a356]' : 'bg-[#e3ecf7] border-[#9eb6ce]';
            let html = `<div class="w-[34px] shrink-0 flex items-center justify-center pt-[2px] text-[15.500px] text-[#4c5158] border-r border-b ${color}">${r}</div>`;
            cols.forEach((c, i) => {
                const value = cells[r] && cells[r][i] !== undefined ? cells[r][i] : '';
                const align = typeof value === 'number' ? 'justify-end' : 'tracking-[0.55px]';
                html += `<div class="w-[82.6px] shrink-0 flex items-center px-[3px] pt-[3px] border-r border-b border-[#d5dae5] text-[15.500px] text-[#2b2b2b] ${align}">${value}</div>`;
            });
            rows.innerHTML += `<div class="flex h-[25.75px]">${html}</div>`;
        }
    </script>
</body>
</html>
